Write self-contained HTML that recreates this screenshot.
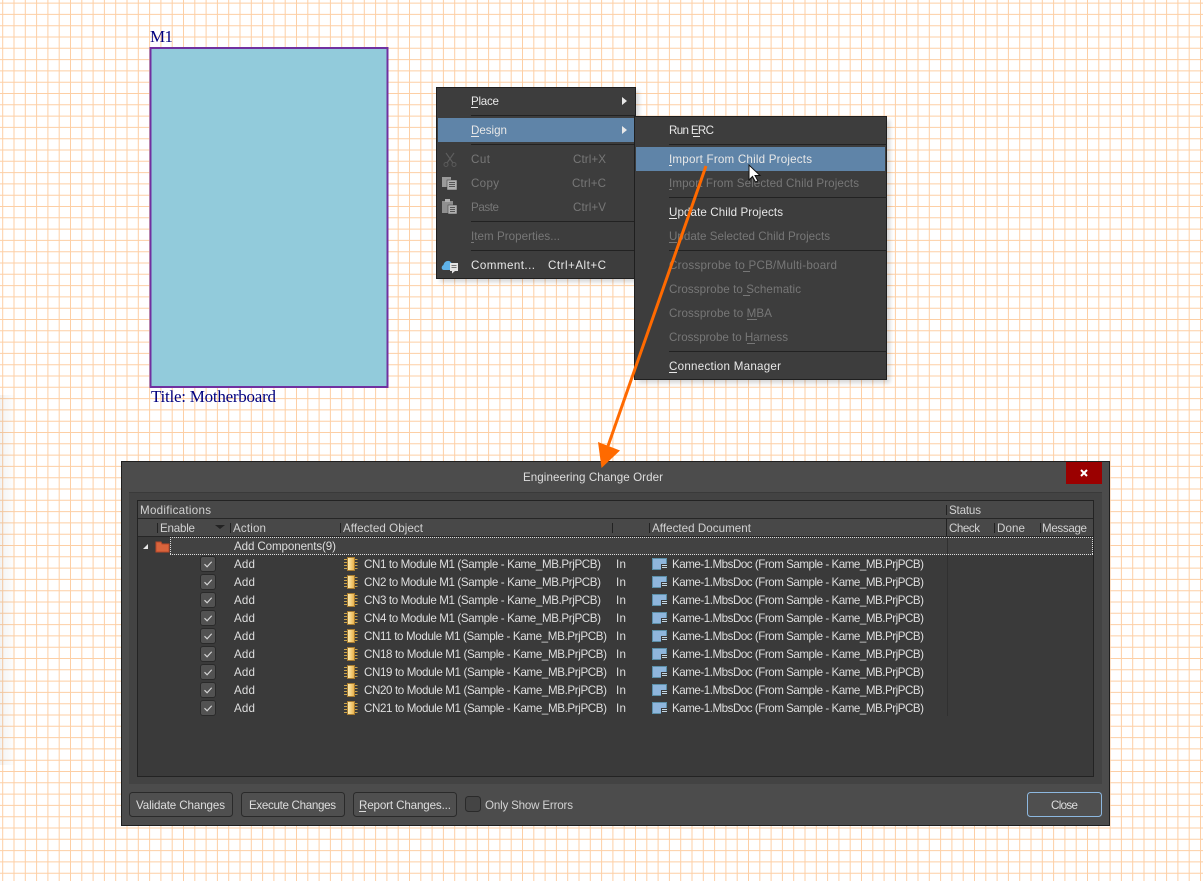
<!DOCTYPE html>
<html><head><meta charset="utf-8"><title>Engineering Change Order</title>
<style>
html,body{margin:0;padding:0;background:#fff}
svg{display:block}
text{font-family:"Liberation Sans",sans-serif;font-size:11.6px;fill:#dedede}
.s{font-family:"Liberation Serif",serif;font-size:17px;fill:#00007f}
.m{fill:#e8e8e8}.d{fill:#777}
.h{fill:#d2d2d2}
</style></head><body>
<svg width="1203" height="881" viewBox="0 0 1203 881" xmlns="http://www.w3.org/2000/svg">
<defs>
<linearGradient id="ls" x1="0" x2="1" y1="0" y2="0"><stop offset="0" stop-color="#000" stop-opacity=".05"/><stop offset="1" stop-color="#000" stop-opacity="0"/></linearGradient>
<linearGradient id="chipg" x1="0" x2="1" y1="0" y2="0"><stop offset="0" stop-color="#fff2b8"/><stop offset="1" stop-color="#e8ad45"/></linearGradient>
<filter id="bl" x="-5%" y="-5%" width="110%" height="110%"><feGaussianBlur stdDeviation="2"/></filter>
<g id="v1"><path d="M2.7 0V881" stroke="#fdcfa5" stroke-width="1" fill="none"/></g>
<g id="v10"><use href="#v1"/><use href="#v1" x="11.3"/><use href="#v1" x="22.6"/><use href="#v1" x="33.9"/><use href="#v1" x="45.2"/><use href="#v1" x="56.5"/><use href="#v1" x="67.8"/><use href="#v1" x="79.1"/><use href="#v1" x="90.4"/><use href="#v1" x="101.7"/></g>
<g id="h1"><path d="M0 3.1H1203" stroke="#fdcfa5" stroke-width="1" fill="none"/></g>
<g id="h10"><use href="#h1"/><use href="#h1" y="11.3"/><use href="#h1" y="22.6"/><use href="#h1" y="33.9"/><use href="#h1" y="45.2"/><use href="#h1" y="56.5"/><use href="#h1" y="67.8"/><use href="#h1" y="79.1"/><use href="#h1" y="90.4"/><use href="#h1" y="101.7"/></g>
<g id="chk"><rect x="200.5" y="-7.5" width="15" height="15" rx="2.5" fill="#525252" stroke="#2a2a2a"/><path d="M204.5 0.2l2.6 2.6 4.6-5" fill="none" stroke="#d8d8d8" stroke-width="1.1"/></g>
<g id="chip"><path d="M344 -4.500h3.500M344 -1.500h3.500M344 1.500h3.500M344 4.500h3.500M354 -4.500h3.500M354 -1.500h3.500M354 1.500h3.500M354 4.500h3.500" stroke="#c9a24a" stroke-width="1"/><rect x="347.500" y="-6.500" width="7" height="13" fill="url(#chipg)" stroke="#a87c30"/></g>
<g id="docic"><rect x="652.500" y="-5.500" width="14" height="11" fill="#8fb6dc" stroke="#5b8fa8"/><rect x="661" y="0" width="6" height="6" fill="#3a3a3a"/><path d="M662 1.500h5M662 3.500h5" stroke="#c4d8e4"/></g>
</defs>

<rect width="1203" height="881" fill="#fff"/>
<g>
<use href="#v10"/><use href="#v10" x="113"/><use href="#v10" x="226"/><use href="#v10" x="339"/><use href="#v10" x="452"/><use href="#v10" x="565"/><use href="#v10" x="678"/><use href="#v10" x="791"/><use href="#v10" x="904"/><use href="#v10" x="1017"/><use href="#v10" x="1130"/>
<use href="#h10"/><use href="#h10" y="113"/><use href="#h10" y="226"/><use href="#h10" y="339"/><use href="#h10" y="452"/><use href="#h10" y="565"/><use href="#h10" y="678"/><use href="#h10" y="791"/>
</g>
<rect x="0" y="395" width="16" height="370" fill="url(#ls)"/>

<!-- module sheet -->
<rect x="150.500" y="48" width="237" height="339" fill="#92cbdb" stroke="#7030a0" stroke-width="2"/>
<text class="s" x="150" y="42" textLength="23">M1</text>
<text class="s" x="151" y="402" textLength="125">Title: Motherboard</text>

<!-- shadows -->
<rect x="440" y="91" width="199" height="191" fill="#000" opacity=".16" filter="url(#bl)"/>
<rect x="638" y="120" width="252" height="263" fill="#000" opacity=".16" filter="url(#bl)"/>

<!-- first menu -->
<rect x="436.500" y="87.500" width="199" height="191" fill="#3d3d3d" stroke="#1f1f1f"/>
<rect x="438" y="118" width="196" height="24" fill="#5f84a8"/>
<path d="M471 115.500H636M471 144.500H636M471 221.500H636M471 250.500H636" stroke="#222"/>
<path d="M622 97l5 4-5 4zM622 126l5 4-5 4z" fill="#e8e8e8"/>
<text class="m" x="471" y="105" textLength="28">Place</text><rect x="471" y="107" width="7" height="1" fill="#e8e8e8"/>
<text class="m" x="471" y="134" textLength="36">Design</text><rect x="471" y="136" width="8" height="1" fill="#e8e8e8"/>
<text class="d" x="471" y="163" textLength="19">Cut</text>
<text class="d" x="573" y="163" textLength="33">Ctrl+X</text>
<text class="d" x="471" y="187" textLength="28">Copy</text>
<text class="d" x="572" y="187" textLength="34">Ctrl+C</text>
<text class="d" x="471" y="211" textLength="28">Paste</text>
<text class="d" x="573" y="211" textLength="33">Ctrl+V</text>
<text class="d" x="471" y="240" textLength="89">Item Properties...</text><rect x="471" y="242" width="3" height="1" fill="#777"/>
<text class="m" x="471" y="269" textLength="64">Comment...</text>
<text class="m" x="548" y="269" textLength="58">Ctrl+Alt+C</text>
<!-- menu icons -->
<path d="M446 153l7 10M454 153l-7 10" stroke="#5e5e5e" stroke-width="1.100" fill="none"/><circle cx="446" cy="164.500" r="2" fill="none" stroke="#5a5a5a"/><circle cx="454" cy="164.500" r="2" fill="none" stroke="#5a5a5a"/>
<rect x="442" y="177" width="9" height="10" fill="#9a9a9a"/><rect x="447" y="180" width="10" height="10" fill="#b0b0b0" stroke="#3d3d3d" stroke-width=".5"/><path d="M449 182.500h6M449 184.500h6M449 186.500h6" stroke="#555"/>
<rect x="442" y="201" width="11" height="12" fill="#8f8f8f"/><rect x="445" y="199" width="5" height="3" fill="#b0b0b0"/><rect x="448" y="205" width="9" height="9" fill="#b0b0b0" stroke="#3d3d3d" stroke-width=".5"/><path d="M450 207.500h5M450 209.500h5M450 211.500h5" stroke="#555"/>
<path d="M444 270c-3 0-3-4-.5-5 .5-4 6-6 8-2 3 0 4 2 3 7z" fill="#5fb2e8"/><rect x="450" y="263" width="8" height="8" fill="#e4e4e4"/><path d="M452 271v2.500l3-2.500z" fill="#e4e4e4"/><path d="M451.500 265.500h5M451.500 267.500h5" stroke="#777"/>

<!-- second menu -->
<rect x="634.500" y="116.500" width="252" height="263" fill="#3d3d3d" stroke="#1f1f1f"/>
<rect x="636" y="147" width="249" height="24" fill="#5f84a8"/>
<path d="M669 144.500H887M669 197.500H887M669 250.500H887M669 351.500H887" stroke="#222"/>
<text class="m" x="669" y="134" textLength="45">Run ERC</text><rect x="693" y="136" width="7" height="1" fill="#e8e8e8"/>
<text class="m" x="669" y="163" textLength="143">Import From Child Projects</text><rect x="669" y="165" width="3" height="1" fill="#e8e8e8"/>
<text class="d" x="669" y="187" textLength="190">Import From Selected Child Projects</text><rect x="669" y="189" width="3" height="1" fill="#777"/>
<text class="m" x="669" y="216" textLength="114">Update Child Projects</text><rect x="669" y="218" width="8" height="1" fill="#e8e8e8"/>
<text class="d" x="669" y="240" textLength="161">Update Selected Child Projects</text><rect x="669" y="242" width="8" height="1" fill="#777"/>
<text class="d" x="669" y="269" textLength="168">Crossprobe to PCB/Multi-board</text><rect x="743" y="271" width="7" height="1" fill="#777"/>
<text class="d" x="669" y="293" textLength="132">Crossprobe to Schematic</text><rect x="743" y="295" width="7" height="1" fill="#777"/>
<text class="d" x="669" y="317" textLength="103">Crossprobe to MBA</text><rect x="747" y="319" width="10" height="1" fill="#777"/>
<text class="d" x="669" y="341" textLength="119">Crossprobe to Harness</text><rect x="747" y="343" width="8" height="1" fill="#777"/>
<text class="m" x="669" y="370" textLength="112">Connection Manager</text><rect x="669" y="372" width="8" height="1" fill="#e8e8e8"/>

<!-- dialog -->
<rect x="121.500" y="461.500" width="988" height="364" fill="#4c4c4c" stroke="#1f1f1f"/>
<rect x="129" y="492" width="973" height="292" fill="#434343"/>
<path d="M129 492.500H1102" stroke="#3a3a3a"/>
<rect x="137.500" y="500.500" width="956" height="276" fill="#3a3a3a" stroke="#232323"/>
<rect x="138" y="501" width="955" height="35" fill="#484848"/>
<path d="M138 518.500H1093M138 536.500H1093" stroke="#262626"/>
<path d="M946.500 505V515M946.500 519V536M157.500 523V533M230.500 523V533M340.500 523V533M612.500 523V533M649.500 523V533M994.500 523V533M1040.500 523V533" stroke="#222"/>
<path d="M947.500 555V716" stroke="#303030"/>
<text x="523" y="481" textLength="140">Engineering Change Order</text>
<rect x="1066" y="462" width="36" height="22" fill="#9b0000"/>
<path d="M1081 470l6 6M1087 470l-6 6" stroke="#fff" stroke-width="2"/>

<text class="h" x="140" y="514" textLength="71">Modifications</text>
<text class="h" x="949" y="514" textLength="32">Status</text>
<text class="h" x="160" y="532" textLength="35">Enable</text>
<path d="M215 525h10l-5 4z" fill="#222"/>
<text class="h" x="233" y="532" textLength="33">Action</text>
<text class="h" x="343" y="532" textLength="80">Affected Object</text>
<text class="h" x="652" y="532" textLength="99">Affected Document</text>
<text class="h" x="949" y="532" textLength="31">Check</text>
<text class="h" x="997" y="532" textLength="28">Done</text>
<text class="h" x="1042" y="532" textLength="45">Message</text>

<!-- group row -->
<rect x="170" y="537" width="923" height="18" fill="#424242"/>
<path d="M170 537.500H1093M170 554.500H1093M170.500 537V555M1092.500 537V555" fill="none" stroke="#ddd" stroke-dasharray="1 1"/>
<path d="M947.500 538V554" stroke="#303030"/>
<path d="M143 549l5-5v5z" fill="#e8e8e8"/>
<path d="M156 542h5l1 2h7v8h-13z" fill="#d9643c" stroke="#b8482a"/>
<text x="234" y="550" textLength="102">Add Components(9)</text>

<!-- rows -->
<g transform="translate(0,564)"><use href="#chk"/><use href="#chip"/><use href="#docic"/><text x="234" y="4" textLength="21">Add</text><text x="364" y="4" textLength="237">CN1 to Module M1 (Sample - Kame_MB.PrjPCB)</text><text x="616" y="4" textLength="10">In</text><text x="672" y="4" textLength="252">Kame-1.MbsDoc (From Sample - Kame_MB.PrjPCB)</text></g>
<g transform="translate(0,582)"><use href="#chk"/><use href="#chip"/><use href="#docic"/><text x="234" y="4" textLength="21">Add</text><text x="364" y="4" textLength="237">CN2 to Module M1 (Sample - Kame_MB.PrjPCB)</text><text x="616" y="4" textLength="10">In</text><text x="672" y="4" textLength="252">Kame-1.MbsDoc (From Sample - Kame_MB.PrjPCB)</text></g>
<g transform="translate(0,600)"><use href="#chk"/><use href="#chip"/><use href="#docic"/><text x="234" y="4" textLength="21">Add</text><text x="364" y="4" textLength="237">CN3 to Module M1 (Sample - Kame_MB.PrjPCB)</text><text x="616" y="4" textLength="10">In</text><text x="672" y="4" textLength="252">Kame-1.MbsDoc (From Sample - Kame_MB.PrjPCB)</text></g>
<g transform="translate(0,618)"><use href="#chk"/><use href="#chip"/><use href="#docic"/><text x="234" y="4" textLength="21">Add</text><text x="364" y="4" textLength="237">CN4 to Module M1 (Sample - Kame_MB.PrjPCB)</text><text x="616" y="4" textLength="10">In</text><text x="672" y="4" textLength="252">Kame-1.MbsDoc (From Sample - Kame_MB.PrjPCB)</text></g>
<g transform="translate(0,636)"><use href="#chk"/><use href="#chip"/><use href="#docic"/><text x="234" y="4" textLength="21">Add</text><text x="364" y="4" textLength="243">CN11 to Module M1 (Sample - Kame_MB.PrjPCB)</text><text x="616" y="4" textLength="10">In</text><text x="672" y="4" textLength="252">Kame-1.MbsDoc (From Sample - Kame_MB.PrjPCB)</text></g>
<g transform="translate(0,654)"><use href="#chk"/><use href="#chip"/><use href="#docic"/><text x="234" y="4" textLength="21">Add</text><text x="364" y="4" textLength="243">CN18 to Module M1 (Sample - Kame_MB.PrjPCB)</text><text x="616" y="4" textLength="10">In</text><text x="672" y="4" textLength="252">Kame-1.MbsDoc (From Sample - Kame_MB.PrjPCB)</text></g>
<g transform="translate(0,672)"><use href="#chk"/><use href="#chip"/><use href="#docic"/><text x="234" y="4" textLength="21">Add</text><text x="364" y="4" textLength="243">CN19 to Module M1 (Sample - Kame_MB.PrjPCB)</text><text x="616" y="4" textLength="10">In</text><text x="672" y="4" textLength="252">Kame-1.MbsDoc (From Sample - Kame_MB.PrjPCB)</text></g>
<g transform="translate(0,690)"><use href="#chk"/><use href="#chip"/><use href="#docic"/><text x="234" y="4" textLength="21">Add</text><text x="364" y="4" textLength="243">CN20 to Module M1 (Sample - Kame_MB.PrjPCB)</text><text x="616" y="4" textLength="10">In</text><text x="672" y="4" textLength="252">Kame-1.MbsDoc (From Sample - Kame_MB.PrjPCB)</text></g>
<g transform="translate(0,708)"><use href="#chk"/><use href="#chip"/><use href="#docic"/><text x="234" y="4" textLength="21">Add</text><text x="364" y="4" textLength="243">CN21 to Module M1 (Sample - Kame_MB.PrjPCB)</text><text x="616" y="4" textLength="10">In</text><text x="672" y="4" textLength="252">Kame-1.MbsDoc (From Sample - Kame_MB.PrjPCB)</text></g>

<!-- buttons -->
<rect x="129.500" y="792.500" width="103" height="24" rx="3" fill="#4f4f4f" stroke="#2a2a2a"/>
<text x="136" y="809" textLength="89">Validate Changes</text>
<rect x="241.500" y="792.500" width="103" height="24" rx="3" fill="#4f4f4f" stroke="#2a2a2a"/>
<text x="249" y="809" textLength="87">Execute Changes</text>
<rect x="353.500" y="792.500" width="103" height="24" rx="3" fill="#4f4f4f" stroke="#2a2a2a"/>
<text x="359" y="809" textLength="92">Report Changes...</text><rect x="359" y="811" width="7" height="1" fill="#dcdcdc"/>
<rect x="465.500" y="796.500" width="15" height="15" rx="3" fill="#444" stroke="#2a2a2a"/>
<text class="h" x="485" y="809" textLength="88">Only Show Errors</text>
<rect x="1027.500" y="792.500" width="74" height="24" rx="3" fill="#4f4f4f" stroke="#8db8e0"/>
<text x="1051" y="809" textLength="27">Close</text>

<!-- orange arrow -->
<path d="M706 166L608 446" stroke="#ff6a00" stroke-width="3" fill="none"/>
<path d="M598 442L620 450.500L601.500 468z" fill="#ff6a00"/>

<!-- cursor -->
<path d="M749 165V180L752.500 176.500L755.500 182L758 181L755 175.500H760z" fill="#fff" stroke="#111" stroke-width="1"/>
</svg>
</body></html>
